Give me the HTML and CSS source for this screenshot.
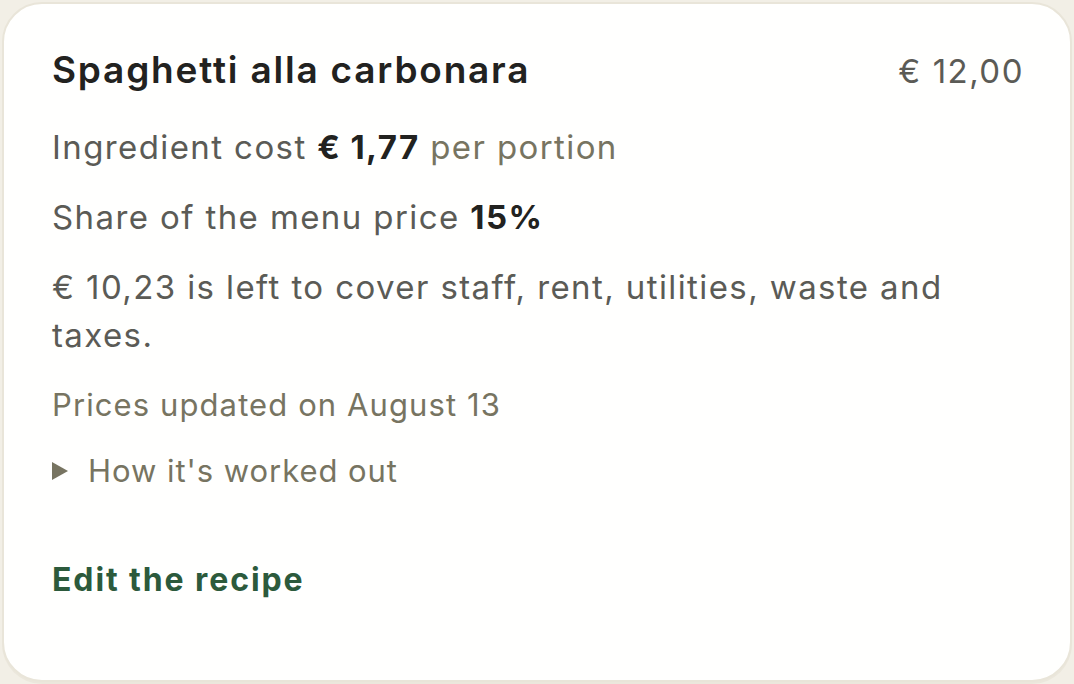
FILE: index.html
```html
<!DOCTYPE html>
<html lang="en">
<head>
<meta charset="utf-8">
<title>Spaghetti alla carbonara</title>
<link rel="stylesheet" href="styles.css">
</head>
<body>
<article class="card">
  <header class="card-head">
    <h2 class="dish">Spaghetti alla carbonara</h2>
    <span class="menu-price">€ 12,00</span>
  </header>
  <p class="line">Ingredient cost <strong>€ 1,77</strong> <span class="muted">per portion</span></p>
  <p class="line">Share of the menu price <strong>15%</strong></p>
  <p class="line left">€ 10,23 is left to cover staff, rent, utilities, waste and taxes.</p>
  <p class="line updated">Prices updated on August 13</p>
  <details class="how">
    <summary><svg class="tri" viewBox="0 0 16 18" width="16" height="18" aria-hidden="true"><path d="M0 0 L16 9 L0 18 Z"/></svg><span>How it's worked out</span></summary>
  </details>
  <a class="edit" href="#">Edit the recipe</a>
</article>
</body>
</html>
```
FILE: styles.css
```css
html, body {
  margin: 0;
  padding: 0;
}
body {
  background: #f2efe6;
  font-family: Inter, "Noto Sans", "Liberation Sans", sans-serif;
  padding: 2px;
  height: 100vh;
  box-sizing: border-box;
}
.card {
  box-sizing: border-box;
  height: 100%;
  background: #fffffe;
  border: 2px solid #e9e5d9;
  border-radius: 40px;
  box-shadow: 0 2px 0 #ebe7dc;
  padding: 42px 46px 48px 48px;
  display: flex;
  flex-direction: column;
  color: #5b5b56;
  font-size: 33px;
  line-height: 48px;
  letter-spacing: 1.4px;
}
.card-head {
  display: flex;
  justify-content: space-between;
  align-items: baseline;
  margin-bottom: 28px;
}
.dish {
  margin: 0;
  font-size: 37px;
  line-height: 48px;
  font-weight: 600;
  letter-spacing: 1.8px;
  color: #222220;
}
.menu-price {
  color: #5b5b56;
  font-size: 33px;
  letter-spacing: 1.5px;
}
.line {
  margin: 0 0 22px;
}
.line.left {
  margin-bottom: 24px;
}
.line strong {
  color: #222220;
  font-weight: 700;
}
.muted {
  color: #777461;
}
.updated {
  color: #777461;
  font-size: 31px;
  line-height: 44px;
  letter-spacing: 1.1px;
  margin-bottom: 22px;
}
.how summary {
  list-style: none;
  display: flex;
  align-items: center;
  gap: 20px;
  color: #777461;
  font-size: 31px;
  line-height: 44px;
  letter-spacing: 0.95px;
  cursor: pointer;
}
.how summary::-webkit-details-marker {
  display: none;
}
.tri {
  fill: #777461;
  flex: none;
}
.edit {
  margin-top: 65px;
  align-self: flex-start;
  color: #2c5a3c;
  font-weight: 700;
  text-decoration: none;
  font-size: 32px;
  line-height: 44px;
  letter-spacing: 1.9px;
}
```
